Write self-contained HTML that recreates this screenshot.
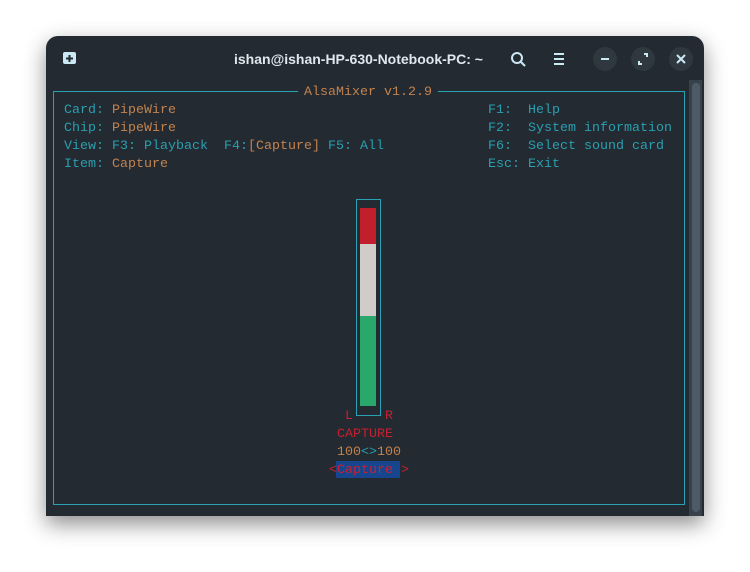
<!DOCTYPE html>
<html><head><style>
body{margin:0;width:750px;height:572px;background:#fff;position:relative;overflow:hidden;font-family:"Liberation Mono",monospace}
.win{position:absolute;left:46px;top:36px;width:658px;height:480px;background:#232a31;border-radius:12px 12px 0 0;box-shadow:0 8px 22px rgba(0,0,0,.45)}
.t{position:absolute;font-size:13.33px;line-height:18px;white-space:pre;color:#2a9fb0}
.o{color:#c3834f}.r{color:#c8202e}
.btn{position:absolute;top:47px;width:24px;height:24px;border-radius:12px;background:#2f383f}
</style></head><body>
<div class="win"></div>
<svg style="position:absolute;left:0;top:0" width="750" height="572">
<g fill="none" stroke="#cbe8f5" stroke-width="2">
<rect x="63" y="52" width="13" height="12" rx="2" fill="#cbe8f5" stroke="none"/>
<path d="M69.5 55v7M66 58.5h7" stroke="#232a31"/>
<circle cx="517" cy="58" r="5"/><path d="M521 62l4 4"/>
<path d="M554 54h10M554 59h10M554 64h10"/>
</g>
</svg>
<div class="btn" style="left:593px"></div><div class="btn" style="left:631px"></div><div class="btn" style="left:669px"></div>
<svg style="position:absolute;left:0;top:0" width="750" height="572" fill="none" stroke="#cbe8f5" stroke-width="2">
<path d="M601 59h8"/>
<path d="M639 61v3h3M647 57v-3h-3"/>
<path d="M677 55l8 8M685 55l-8 8"/>
</svg>
<div style="position:absolute;left:234px;top:51px;font:bold 14px 'Liberation Sans',sans-serif;color:#dfe8ee;white-space:pre">ishan@ishan-HP-630-Notebook-PC: ~</div>
<div style="position:absolute;left:53px;top:91px;width:630px;height:412px;border:1.5px solid #2aa1b3"></div>
<div class="t" style="left:298px;top:84px;background:#232a31;padding:0 6px"><span class="o">AlsaMixer v1.2.9</span></div>
<div style="position:absolute;left:689px;top:80px;width:13px;height:436px;background:#36414a"></div>
<div style="position:absolute;left:692px;top:83px;width:8px;height:429px;border-radius:4px;background:#4d5b66"></div>
<div class="t" style="left:64px;top:102px">Card: <span class="o">PipeWire</span>
Chip: <span class="o">PipeWire</span>
View: F3: Playback  F4:<span class="o">[Capture]</span> F5: All
Item: <span class="o">Capture</span></div>
<div class="t" style="left:488px;top:102px">F1:  Help
F2:  System information
F6:  Select sound card
Esc: Exit</div>
<div style="position:absolute;left:356px;top:199px;width:23px;height:215px;border:1.2px solid #2aa1b3"></div>
<div style="position:absolute;left:360px;top:208px;width:16px;height:36px;background:#c11f2b"></div>
<div style="position:absolute;left:360px;top:244px;width:16px;height:72px;background:#d0ccca"></div>
<div style="position:absolute;left:360px;top:316px;width:16px;height:90px;background:#2aa76a"></div>
<div style="position:absolute;left:336px;top:461px;width:64px;height:17px;background:#17468e"></div>
<div class="t" style="left:337px;top:408px"><span class="r"> L    R</span>
<span class="r">CAPTURE</span>
<span class="o">100</span>&lt;&gt;<span class="o">100</span></div>
<div class="t r" style="left:329px;top:462px">&lt;Capture &gt;</div>
</body></html>
